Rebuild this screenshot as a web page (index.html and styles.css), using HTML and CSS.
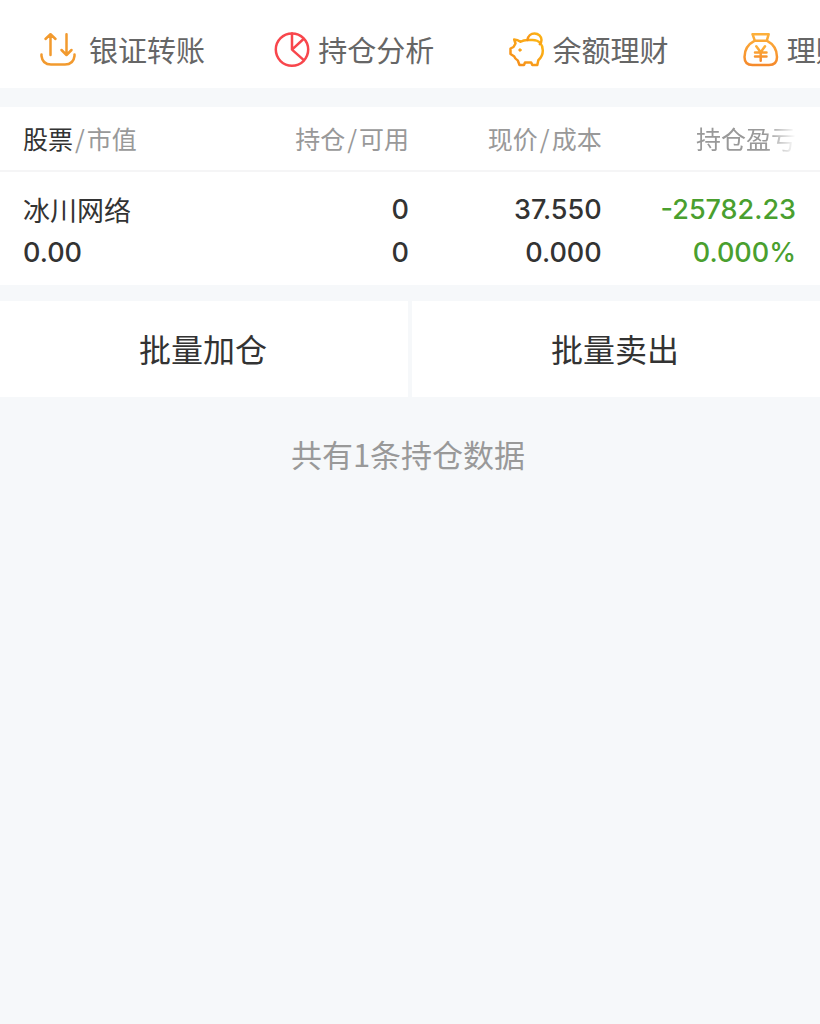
FILE: index.html
```html
<!DOCTYPE html>
<html lang="zh-CN">
<head>
<meta charset="utf-8">
<meta name="viewport" content="width=device-width, initial-scale=1">
<title>持仓</title>
<link rel="stylesheet" href="styles.css">
</head>
<body>
<nav class="tools">
  <a class="tool tool-wide" href="#">
    <svg class="icon" viewBox="0 0 36 36" fill="none" stroke="#f29a2e" stroke-width="2.5" stroke-linecap="round" stroke-linejoin="round" aria-hidden="true">
      <path d="M10.500 23V2.200M5.500 7l5-4.800 5 4.800M26.500 2.200v20.500M21.500 18l5 5 5-5"/>
      <path d="M1.500 22.500v1.500Q2.500 32.500 11 32.500H25Q33.500 32.500 34.500 24v-1.500"/>
    </svg>
    <span>银证转账</span>
  </a>
  <a class="tool" href="#">
    <svg class="icon" viewBox="0 0 36 36" fill="none" stroke="#f8464c" stroke-width="2.5" stroke-linecap="round" stroke-linejoin="round" aria-hidden="true">
      <circle cx="18" cy="17.600" r="16.200"/>
      <path d="M18 1.500V17.600L29.500 7M18 17.600l11.800 10.500"/>
    </svg>
    <span>持仓分析</span>
  </a>
  <a class="tool" href="#">
    <svg class="icon" viewBox="0 0 36 36" fill="none" stroke="url(#pig)" stroke-width="2.5" stroke-linecap="round" stroke-linejoin="round" aria-hidden="true">
      <defs><linearGradient id="pig" x1="0" y1="1" x2="1" y2="0"><stop offset="0" stop-color="#f58a1c"/><stop offset="1" stop-color="#fdb813"/></linearGradient></defs>
      <path d="M5.200 7.500 Q8.500 7.500 11.500 9.800Q14.500 8 18.500 8H23.500C30.500 8 33.800 12.800 33.800 18.500C33.800 23 32 26 29.300 28.200L28.300 33H23.300L22.200 30.500H16L15 33H10.500L8.800 28.500Q6 27 5 24.200L1.500 22V16.500L4.500 15L6.500 11.500Z"/>
      <path d="M18.500 8C19 4 22 1.500 25.500 1.500C29.500 1.500 32.500 4.500 32.500 8Q32.500 10.500 30.800 12.200"/>
      <circle cx="11" cy="18" r="1.200" fill="#f79a1a" stroke-width="1"/>
    </svg>
    <span>余额理财</span>
  </a>
  <a class="tool" href="#">
    <svg class="icon" viewBox="0 0 36 36" fill="none" stroke="url(#bag)" stroke-width="2.5" stroke-linecap="round" stroke-linejoin="round" aria-hidden="true">
      <defs><linearGradient id="bag" x1="0" y1="0" x2="0" y2="1"><stop offset="0" stop-color="#fdb03a"/><stop offset="1" stop-color="#f58a2c"/></linearGradient></defs>
      <path d="M9.500 2.200H25.700L23.800 8.700C30 12 34 18 34 25Q34 33 26 33H9.500Q1.500 33 1.500 25C1.500 18 5.500 12 11.800 8.700ZM11.800 8.700H23.800"/>
      <path d="M13.300 14.200l4.400 6L22 14.200M17.700 20.200V28.800M12 20.500H23.500M12 24.600H23.500"/>
    </svg>
    <span>理财产品</span>
  </a>
</nav>

<main>
  <table class="holdings">
    <colgroup><col class="col-stock"><col class="col-amount"><col class="col-price"><col></colgroup>
    <thead>
      <tr>
        <th scope="col"><strong class="sorted">股票</strong><span class="slash">/</span>市值</th>
        <th scope="col">持仓<span class="slash">/</span>可用</th>
        <th scope="col">现价<span class="slash">/</span>成本</th>
        <th scope="col"><span class="fade">持仓盈亏</span></th>
      </tr>
    </thead>
    <tbody>
      <tr>
        <td><div class="name">冰川网络</div><div>0.00</div></td>
        <td><div>0</div><div>0</div></td>
        <td><div>37.550</div><div>0.000</div></td>
        <td class="loss"><div>-25782.23</div><div>0.000%</div></td>
      </tr>
    </tbody>
  </table>

  <div class="actions">
    <button class="action" type="button">批量加仓</button>
    <button class="action" type="button">批量卖出</button>
  </div>
  <p class="summary">共有1条持仓数据</p>
</main>
</body>
</html>
```
FILE: styles.css
```css
* {
  box-sizing: border-box;
}

body {
  margin: 0;
  background: #f6f8fa;
  color: #333;
  font-family: "Noto Sans CJK SC", sans-serif;
}

.tools {
  display: flex;
  height: 88px;
  padding-top: 12px;
  overflow: hidden;
  background: #fff;
}

.tool {
  display: flex;
  flex: 0 0 calc(100% / 3.5);
  align-items: center;
  gap: 8px;
  padding-left: 40px;
  color: #666;
  font-size: 29px;
  line-height: 40px;
  text-decoration: none;
  white-space: nowrap;
}

.tool span {
  padding-bottom: 2px;
}

.tool-wide {
  gap: 13px;
}

.icon {
  flex: none;
  width: 36px;
  height: 36px;
}

.holdings {
  width: 100%;
  margin-top: 19px;
  border-collapse: separate;
  border-spacing: 0;
  table-layout: fixed;
  background: #fff;
}

.col-stock {
  width: 26%;
}

.col-amount {
  width: 24%;
}

.col-price {
  width: 23.5%;
}

.holdings th {
  height: 65px;
  padding: 0 1px 2px 0;
  border-bottom: 2px solid #f5f5f6;
  color: #999;
  font-size: 25px;
  font-weight: 400;
  line-height: 36px;
  text-align: right;
  white-space: nowrap;
}

.holdings td {
  padding: 16px 1px 11px 0;
  font-family: Inter, "Noto Sans CJK SC", sans-serif;
  font-size: 27px;
  font-weight: 500;
  line-height: 43px;
  text-align: right;
}

.holdings th:first-child,
.holdings td:first-child {
  padding-left: 23px;
  text-align: left;
}

.holdings th:last-child,
.holdings td:last-child {
  padding-right: 24px;
}

.sorted {
  color: #333;
  font-weight: 400;
}

.slash {
  margin: 0 2px;
}

.fade {
  -webkit-mask-image: linear-gradient(to right, #000 70%, transparent);
  mask-image: linear-gradient(to right, #000 70%, transparent);
}

.name {
  font-family: "Noto Sans CJK SC", sans-serif;
  font-weight: 400;
}

.holdings .loss {
  color: #4a9f2f;
}

.actions {
  display: grid;
  grid-template-columns: 1fr 1fr;
  gap: 4px;
  margin-top: 16px;
}

.action {
  height: 96px;
  padding: 0 2px 2px 0;
  border: 0;
  background: #fff;
  color: #333;
  font-family: inherit;
  font-size: 32px;
}

.summary {
  margin: 34px 4px 0 0;
  color: #999;
  font-size: 31px;
  line-height: 46px;
  text-align: center;
}
```
